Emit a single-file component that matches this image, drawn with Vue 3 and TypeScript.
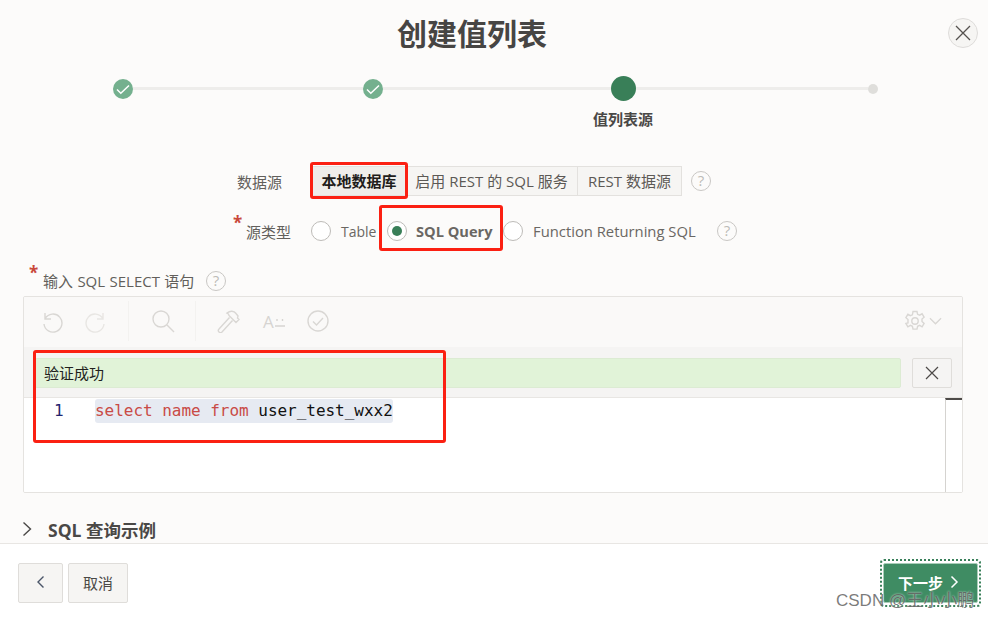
<script setup lang="ts">
const sources: { label: string; active?: boolean; width: number }[] = [
  { label: '本地数据库', active: true, width: 94 },
  { label: '启用 REST 的 SQL 服务', width: 172 },
  { label: 'REST 数据源', width: 104 },
]
const marks = [
  { left: 310, top: 162, width: 98, height: 37 },
  { left: 379, top: 205, width: 124, height: 46 },
  { left: 33, top: 350, width: 413, height: 93 },
]
</script>

<template>
  <div class="page">
    <main class="body">
      <header class="head">
        <h1>创建值列表</h1>
        <button class="close" aria-label="close">
          <svg width="16" height="16" viewBox="0 0 16 16"><path d="M1 1l14 14M15 1L1 15" /></svg>
        </button>
      </header>

      <div class="stepper">
        <span class="dot done"><svg width="14" height="14" viewBox="0 0 14 14"><path d="M1 7.500l3.800 3.800L13 3.500" /></svg></span>
        <i class="line l1"></i>
        <span class="dot done"><svg width="14" height="14" viewBox="0 0 14 14"><path d="M1 7.500l3.800 3.800L13 3.500" /></svg></span>
        <i class="line l2"></i>
        <span class="dot current"></span>
        <i class="line l3"></i>
        <span class="dot todo"></span>
      </div>
      <div class="step-label">值列表源</div>

      <div class="row row-source">
        <span class="lbl">数据源</span>
        <div class="pills">
          <span v-for="s in sources" :key="s.label" class="pill" :class="{ on: s.active }" :style="{ width: s.width + 'px' }">{{ s.label }}</span>
        </div>
        <span class="help h1">?</span>
      </div>

      <div class="row row-type">
        <span class="req req-a">*</span>
        <span class="lbl">源类型</span>
        <span class="radio r1"></span><span class="opt o1">Table</span>
        <span class="radio r2 checked"></span><span class="opt o2">SQL Query</span>
        <span class="radio r3"></span><span class="opt o3">Function Returning SQL</span>
        <span class="help h2">?</span>
      </div>

      <div class="row row-sql">
        <span class="req req-b">*</span>
        <span class="lbl">输入 SQL SELECT 语句</span>
        <span class="help h3">?</span>
      </div>

      <section class="editor">
        <div class="toolbar">
          <svg class="ic" width="24" height="24" viewBox="0 0 24 24"><path d="M5 4v6h6M5.200 9.500A9 9 0 1 1 4 15" /></svg>
          <svg class="ic ic-faint redo" width="24" height="24" viewBox="0 0 24 24"><path d="M19 4v6h-6M18.800 9.500A9 9 0 1 0 20 15" /></svg>
          <i class="sep sep1"></i>
          <svg class="ic search" width="24" height="24" viewBox="0 0 24 24"><circle cx="10" cy="10" r="8" /><path d="M16 16l7 7" /></svg>
          <i class="sep sep2"></i>
          <svg class="ic hammer" width="24" height="24" viewBox="0 0 24 24"><path d="M12.500 8.500L2 20a2 2 0 0 0 3 3L15.500 11.500M10 4c3-2.500 7-2.500 9 .5l2 2.500-.5 2 1.500 1.500-3 3-4-4-3-3c0-1-1-2-2-2.500z" /></svg>
          <span class="az">A<svg width="10" height="14" viewBox="0 0 10 14"><path d="M2 5v2M7.500 5v2M0 12h10" /></svg></span>
          <svg class="ic check" width="24" height="24" viewBox="0 0 24 24"><circle cx="12" cy="12" r="10" /><path d="M7 12.500l3.500 3.500 6.500-7" /></svg>
          <svg class="ic gear" width="22" height="22" viewBox="0 0 22 22"><path d="M9 1.500h4l.6 2.800 2 .9 2.500-1.400 2 3.400-2.100 1.900v2.400l2.100 1.900-2 3.400-2.500-1.400-2 .9-.6 2.800H9l-.6-2.800-2-.9-2.500 1.400-2-3.400L4 13V9.600L1.900 7.700l2-3.400 2.500 1.400 2-.9z" /><circle cx="11" cy="11" r="3.200" /></svg>
          <svg class="ic caret" width="14" height="14" viewBox="0 0 14 14"><path d="M1 4l6 6 6-6" /></svg>
        </div>
        <div class="msgbar">
          <div class="msg">验证成功</div>
          <button class="msg-x" aria-label="dismiss">
            <svg width="14" height="14" viewBox="0 0 14 14"><path d="M1 1l12 12M13 1L1 13" /></svg>
          </button>
        </div>
        <div class="code">
          <span class="gutter">1</span>
          <span class="src"><em>select</em> <em>name</em> <em>from</em> user_test_wxx2</span>
          <div class="scroll"></div>
        </div>
      </section>

      <div class="more">
        <svg width="10" height="16" viewBox="0 0 10 16"><path d="M1.500 1.500L8.500 8l-7 6.500" /></svg>
        <span>SQL 查询示例</span>
      </div>
    </main>

    <footer class="foot">
      <button class="btn back" aria-label="back">
        <svg width="9" height="14" viewBox="0 0 9 14"><path d="M7.500 1.500L2 7l5.500 5.500" /></svg>
      </button>
      <button class="btn cancel">取消</button>
      <div class="next-wrap">
        <button class="next">下一步<svg width="9" height="14" viewBox="0 0 9 14"><path d="M1.500 1.500L7 7l-5.500 5.500" /></svg></button>
      </div>
    </footer>

    <div v-for="(m, i) in marks" :key="i" class="mark" :style="{ left: m.left + 'px', top: m.top + 'px', width: m.width + 'px', height: m.height + 'px' }"></div>
    <div class="wm">CSDN @王小小鹏</div>
  </div>
</template>

<style>
html, body { margin: 0; background: #fff; }
</style>

<style scoped>
.page {
  position: relative; width: 988px; height: 618px; overflow: hidden;
  display: flex; flex-direction: column;
  font-family: "Open Sans", "Noto Sans CJK SC", sans-serif;
  font-size: 15px; color: #5c5955; background: #fff;
}
.body { height: 543px; background: #fcfbfa; box-sizing: border-box; overflow: hidden; }
button { font-family: inherit; padding: 0; }
svg path, svg circle { fill: none; }

.head { height: 68px; display: flex; justify-content: center; position: relative; }
h1 { margin: 11px 44px 0 0; font-size: 30px; line-height: 42px; font-weight: 700; color: #474543; font-family: "Noto Sans CJK SC", sans-serif; }
.close { position: absolute; left: 948px; top: 18px; width: 30px; height: 30px; border-radius: 50%; border: 1px solid #dedcda; background: #f6f5f3; display: flex; align-items: center; justify-content: center; }
.close path { stroke: #55524f; stroke-width: 1.300; }

.stepper { display: flex; align-items: center; height: 25px; margin: 8px 0 0 113px; }
.dot { flex: none; border-radius: 50%; display: flex; align-items: center; justify-content: center; }
.done { width: 20px; height: 20px; background: #74b08e; }
.done path { stroke: #fff; stroke-width: 1.500; }
.current { width: 25px; height: 25px; background: #397f58; }
.todo { width: 10px; height: 10px; background: #dfdedb; }
.line { display: block; flex: none; height: 3px; background: #eeedeb; }
.l1 { width: 230px; } .l2 { width: 227.500px; } .l3 { width: 232.500px; }
.step-label { margin: 7px 0 0 593px; width: 60px; line-height: 22px; font-size: 15px; font-weight: 700; color: #4a4846; font-family: "Noto Sans CJK SC", sans-serif; }

.row { position: relative; display: flex; align-items: center; }
.lbl { color: #625f5b; white-space: nowrap; }
.help { flex: none; box-sizing: border-box; width: 20px; height: 20px; border: 1.500px solid #c9c7c4; border-radius: 50%; color: #bdbbb7; font-size: 15px; line-height: 17px; text-align: center; }

.row-source { margin: 36px 0 0 237px; height: 30px; }
.pills { display: flex; margin-left: 30px; }
.pill { box-sizing: border-box; height: 30px; line-height: 28px; border: 1px solid #e3e1de; border-left-width: 0; background: #f6f5f3; text-align: center; color: #5c5955; white-space: nowrap; }
.pill.on { background: #efedea; color: #1f1d1b; font-weight: 700; border-left-width: 1px; }
.h1 { margin-left: 9px; }

.row-type { margin-top: 20px; height: 30px; padding-left: 246px; }
.req { position: absolute; color: #c9483a; font-size: 17px; line-height: 20px; font-weight: 700; }
.req-a { left: 233px; top: -3px; }
.radio { flex: none; box-sizing: border-box; width: 20px; height: 20px; border: 1px solid #bdbbb8; border-radius: 50%; background: #fff; display: flex; align-items: center; justify-content: center; }
.radio.checked::after { content: ""; width: 10px; height: 10px; border-radius: 50%; background: #397f58; }
.r1 { margin-left: 20px; } .o1 { margin-left: 10px; width: 36px; font-size: 14px; }
.r2 { margin-left: 10px; } .o2 { margin-left: 9px; width: 77px; font-weight: 700; color: #4a4846; white-space: nowrap; font-size: 14.600px; }
.r3 { margin-left: 10px; } .o3 { margin-left: 10px; width: 163px; white-space: nowrap; font-size: 14.800px; }
.opt { color: #6a6763; }
.h2 { margin-left: 21px; }

.row-sql { margin-top: 20px; height: 30px; padding-left: 43px; }
.req-b { left: 29px; top: -3px; }
.row-sql .lbl { width: 152px; font-size: 15px; word-spacing: 0.500px; padding-bottom: 2px; }
.h3 { margin-left: 11px; }

.editor { box-sizing: border-box; width: 940px; height: 197px; margin: 0 0 0 23px; border: 1px solid #e5e3e0; border-radius: 2px; display: flex; flex-direction: column; overflow: hidden; }
.toolbar { height: 50px; box-sizing: border-box; padding-bottom: 2px; flex: none; display: flex; align-items: center; background: #faf9f8; position: relative; }
.ic path, .ic circle { stroke: #d9d7d4; stroke-width: 1.400; }
.toolbar .ic:first-child { margin-left: 16px; }
.redo { margin-left: 20px; }
.ic-faint path { stroke: #e8e6e3; }
.sep { display: block; width: 1px; height: 40px; background: #f3f2f0; }
.sep1 { margin-left: 20px; }
.search { margin-left: 22px; }
.sep2 { margin-left: 20px; }
.hammer { margin-left: 21px; }
.az { margin-left: 22px; width: 24px; color: #d6d4d1; font-size: 17px; display: flex; align-items: center; gap: 1px; }
.az path { stroke: #d6d4d1; stroke-width: 1.400; }
.check { margin-left: 19px; }
.gear { margin-left: auto; }
.caret { margin: 0 20px 0 3px; width: 13px; }

.msgbar { flex: none; height: 51px; box-sizing: border-box; background: #f5f4f3; border-bottom: 1px solid #e8e6e3; padding: 11px 10px 0 11px; display: flex; gap: 11px; }
.msg { box-sizing: border-box; flex: 0 0 866px; height: 30px; line-height: 29px; padding-left: 8px; background: #e1f3d8; border: 1px solid #dcebd3; border-radius: 2px; color: #211f1d; font-size: 15px; }
.msg-x { flex: none; box-sizing: border-box; width: 40px; height: 30px; background: #f5f4f3; border: 1px solid #dfddda; border-radius: 2px; display: flex; align-items: center; justify-content: center; }
.msg-x path { stroke: #4d4a48; stroke-width: 1.200; }

.code { flex: 1; display: flex; background: #fff; position: relative; font-family: "DejaVu Sans Mono", monospace; font-size: 16px; letter-spacing: -0.030px; line-height: 24px; align-items: flex-start; color: #111; padding-top: 1px; }
.gutter { width: 71px; padding-left: 30px; box-sizing: border-box; color: #24246e; }
.src { background: #e6eaf2; border-radius: 3px; white-space: pre; }
.src em { font-style: normal; color: #c94b46; }
.scroll { position: absolute; right: 0; top: 0; bottom: 0; width: 17px; border-left: 1px solid #d5d3d0; border-top: 2px solid #4d4a48; box-sizing: border-box; background: #fff; }

.more { display: flex; align-items: center; height: 24px; margin: 24px 0 0 22px; }
.more path { stroke: #4a4846; stroke-width: 1.400; }
.more span { margin-left: 16px; font-size: 17.500px; font-weight: 700; color: #4a4846; }

.foot { flex: 1; box-sizing: border-box; border-top: 1px solid #e8e6e3; background: #fff; display: flex; align-items: flex-start; padding: 19px 0 0 18px; position: relative; }
.btn { box-sizing: border-box; height: 40px; padding-bottom: 2px; background: #f6f5f3; border: 1px solid #dfddda; border-radius: 2px; color: #4a4846; font-size: 15px; display: flex; align-items: center; justify-content: center; }
.back { width: 45px; }
.back path { stroke: #4a5568; stroke-width: 1.400; }
.cancel { width: 60px; margin-left: 5px; }
.next-wrap { margin-left: auto; margin-right: 7px; margin-top: -4px; box-sizing: border-box; width: 101px; height: 48px; border: 2px dotted #39805a; border-radius: 4px; padding: 2px 1px; }
.next { width: 100%; height: 100%; box-sizing: border-box; padding: 0 4px 2px 0; background: #3f8c63; border: 1px solid #a9cdb9; border-radius: 2px; color: #fff; font-weight: 700; font-size: 15px; display: flex; align-items: center; justify-content: center; gap: 7px; }
.next path { stroke: #fff; stroke-width: 1.500; }

.mark { position: absolute; box-sizing: border-box; border: 3px solid #fb2012; border-radius: 3px; pointer-events: none; }
.wm { position: absolute; left: 836px; top: 590px; font-family: "Liberation Sans", "Noto Sans CJK SC", sans-serif; font-size: 17px; line-height: 22px; color: rgba(80, 80, 80, 0.75); text-shadow: 0 0 2px rgba(255, 255, 255, 0.85); white-space: nowrap; }
</style>
